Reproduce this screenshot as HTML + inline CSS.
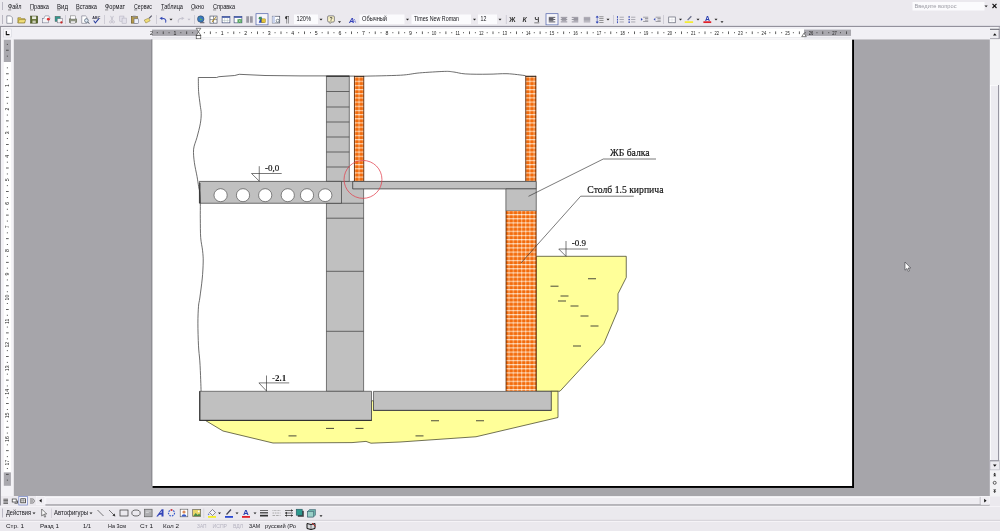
<!DOCTYPE html>
<html><head><meta charset="utf-8"><title>Word</title>
<style>
html,body{margin:0;padding:0;background:#EBE9EE;overflow:hidden;}
body{width:1000px;height:531px;font-family:"Liberation Sans",sans-serif;}
svg{display:block;position:absolute;left:0;top:0;will-change:transform;}
text{white-space:pre;}
</style></head><body>
<svg width="1000" height="531" viewBox="0 0 1000 531" shape-rendering="auto">
<rect x="0" y="0" width="1000" height="531" fill="#EBE9EE"/>
<text x="8" y="8.8" font-size="6.3" fill="#15151a" font-family="Liberation Sans" font-weight="normal" text-anchor="start" textLength="13.5" lengthAdjust="spacingAndGlyphs" >Файл</text>
<rect x="8" y="9.7" width="3.2" height="0.5" fill="#333"/>
<text x="30" y="8.8" font-size="6.3" fill="#15151a" font-family="Liberation Sans" font-weight="normal" text-anchor="start" textLength="19" lengthAdjust="spacingAndGlyphs" >Правка</text>
<rect x="30" y="9.7" width="3.2" height="0.5" fill="#333"/>
<text x="57" y="8.8" font-size="6.3" fill="#15151a" font-family="Liberation Sans" font-weight="normal" text-anchor="start" textLength="11" lengthAdjust="spacingAndGlyphs" >Вид</text>
<rect x="57" y="9.7" width="3.2" height="0.5" fill="#333"/>
<text x="76" y="8.8" font-size="6.3" fill="#15151a" font-family="Liberation Sans" font-weight="normal" text-anchor="start" textLength="21" lengthAdjust="spacingAndGlyphs" >Вставка</text>
<rect x="76" y="9.7" width="3.2" height="0.5" fill="#333"/>
<text x="105" y="8.8" font-size="6.3" fill="#15151a" font-family="Liberation Sans" font-weight="normal" text-anchor="start" textLength="20" lengthAdjust="spacingAndGlyphs" >Формат</text>
<rect x="105" y="9.7" width="3.2" height="0.5" fill="#333"/>
<text x="134" y="8.8" font-size="6.3" fill="#15151a" font-family="Liberation Sans" font-weight="normal" text-anchor="start" textLength="18" lengthAdjust="spacingAndGlyphs" >Сервис</text>
<rect x="134" y="9.7" width="3.2" height="0.5" fill="#333"/>
<text x="161" y="8.8" font-size="6.3" fill="#15151a" font-family="Liberation Sans" font-weight="normal" text-anchor="start" textLength="22" lengthAdjust="spacingAndGlyphs" >Таблица</text>
<rect x="161" y="9.7" width="3.2" height="0.5" fill="#333"/>
<text x="191" y="8.8" font-size="6.3" fill="#15151a" font-family="Liberation Sans" font-weight="normal" text-anchor="start" textLength="13" lengthAdjust="spacingAndGlyphs" >Окно</text>
<rect x="191" y="9.7" width="3.2" height="0.5" fill="#333"/>
<text x="213" y="8.8" font-size="6.3" fill="#15151a" font-family="Liberation Sans" font-weight="normal" text-anchor="start" textLength="22" lengthAdjust="spacingAndGlyphs" >Справка</text>
<rect x="213" y="9.7" width="3.2" height="0.5" fill="#333"/>
<rect x="2" y="2" width="1" height="8" fill="#b9b7c2"/>
<rect x="2" y="15" width="1" height="9" fill="#b9b7c2"/>
<rect x="912.5" y="2" width="72" height="8.5" fill="#fbfbfd"/>
<text x="914.5" y="8.2" font-size="5.8" fill="#9a9aa2" font-family="Liberation Sans" font-weight="normal" text-anchor="start" textLength="42" lengthAdjust="spacingAndGlyphs" >Введите вопрос</text>
<path d="M984.5 5.5h3.2l-1.6 1.8z" fill="#222"/>
<path d="M992.5 3.8l4 4.2M996.5 3.8l-4 4.2" stroke="#111" stroke-width="1.1"/>
<g transform="translate(9.6,19.6) scale(0.93)"><path d="M-3 -4h4l2 2v6h-6z" fill="#fff" stroke="#6b6f80" stroke-width="0.7"/></g>
<g transform="translate(21.6,19.6) scale(0.93)"><path d="M-4 3.5v-5.5h3l1 1h3.5v4.5z" fill="#d9c04f" stroke="#7a6a20" stroke-width="0.6"/><path d="M-4 3.5l1.5-3.5h7l-1.5 3.5z" fill="#f1de7a" stroke="#7a6a20" stroke-width="0.5"/></g>
<g transform="translate(34.1,19.6) scale(0.93)"><rect x="-3.8" y="-3.8" width="7.6" height="7.6" fill="#5a6a2a" stroke="#39431a" stroke-width="0.6"/><rect x="-2.2" y="-3.5" width="4.4" height="3" fill="#e9eadf"/><rect x="-1.8" y="1" width="3.6" height="2.6" fill="#c9cbb8"/></g>
<g transform="translate(45.6,19.6) scale(0.93)"><rect x="-3.5" y="-1" width="6.5" height="4.5" fill="#f3f3f6" stroke="#70758a" stroke-width="0.6"/><path d="M-2 -1l1.5-3h4l1.5 3" fill="#fff" stroke="#70758a" stroke-width="0.6"/><circle cx="3" cy="-0.5" r="1.6" fill="#d33"/></g>
<g transform="translate(58.6,19.6) scale(0.93)"><rect x="-3.8" y="-3.5" width="5.5" height="5.5" fill="#2e9a8e" stroke="#555" stroke-width="0.5"/><rect x="-1.5" y="-1" width="5.5" height="4.5" fill="#f5f5f5" stroke="#667" stroke-width="0.5"/><circle cx="3" cy="3" r="1.2" fill="#c22"/></g>
<rect x="65.4" y="15" width="0.6" height="9" fill="#bdbbc7"/>
<g transform="translate(73,19.6) scale(0.93)"><rect x="-4" y="-0.8" width="8" height="4" fill="#9aa18a" stroke="#555a48" stroke-width="0.6"/><rect x="-2.5" y="-4" width="5" height="3.4" fill="#fff" stroke="#666" stroke-width="0.5"/><rect x="-2.5" y="1.5" width="5" height="2.3" fill="#eee" stroke="#666" stroke-width="0.4"/></g>
<g transform="translate(85,19.6) scale(0.93)"><path d="M-3.5 -4h4l1.5 1.5v6.5h-5.5z" fill="#fff" stroke="#667" stroke-width="0.6"/><circle cx="1.5" cy="1" r="2" fill="#dfe9f5" stroke="#456" stroke-width="0.7"/><path d="M3 2.6l1.6 1.8" stroke="#345" stroke-width="1"/></g>
<g transform="translate(96,19.6) scale(0.93)"><text x="-4" y="-0.5" font-size="4" font-family="Liberation Sans" fill="#334" font-weight="bold">ABC</text><path d="M-2.5 1l1.8 2.6l3.8-4.6" fill="none" stroke="#2a3fa0" stroke-width="1.1"/></g>
<rect x="104.4" y="15" width="0.6" height="9" fill="#bdbbc7"/>
<g transform="translate(112,19.6) scale(0.93)"><path d="M-1.5 -4l2.2 5M1.5 -4l-2.2 5" stroke="#b9b7c4" stroke-width="0.8"/><circle cx="-1.5" cy="2.5" r="1.2" fill="none" stroke="#b9b7c4" stroke-width="0.7"/><circle cx="1.5" cy="2.5" r="1.2" fill="none" stroke="#b9b7c4" stroke-width="0.7"/></g>
<g transform="translate(123,19.6) scale(0.93)"><rect x="-3.5" y="-3.8" width="4.5" height="5.5" fill="#e3e1ea" stroke="#b4b2c0" stroke-width="0.6"/><rect x="-1" y="-1.6" width="4.5" height="5.5" fill="#e3e1ea" stroke="#b4b2c0" stroke-width="0.6"/></g>
<g transform="translate(135,19.6) scale(0.93)"><rect x="-4" y="-3.2" width="6.5" height="7" fill="#b59a4a" stroke="#5d4d1d" stroke-width="0.6"/><rect x="-2.3" y="-4.2" width="3" height="1.8" fill="#8a8a92"/><rect x="-1" y="-0.8" width="5" height="5" fill="#eef0fa" stroke="#555c7a" stroke-width="0.5"/></g>
<g transform="translate(148,19.6) scale(0.93)"><path d="M-4 0.5l4.5-2 1.8 2.8-4.6 2.4z" fill="#f0dd78" stroke="#7c6d26" stroke-width="0.5"/><path d="M1.2 -1.2l2.8-3" stroke="#556" stroke-width="1.2"/></g>
<rect x="156.4" y="15" width="0.6" height="9" fill="#bdbbc7"/>
<g transform="translate(163,19.6) scale(0.93)"><path d="M2.8 3.2c1.2-3.4-1.4-5.4-4.6-3.9" fill="none" stroke="#2f45b5" stroke-width="1.1"/><path d="M-3.8 -1.5l3.2-1.6-0.3 3.2z" fill="#2f45b5"/></g>
<path d="M169.5 18.7h3l-1.5 1.8z" fill="#222"/>
<g transform="translate(181,19.6) scale(0.93)"><path d="M-2.8 3.2c-1.2-3.4 1.4-5.4 4.6-3.9" fill="none" stroke="#c4c2ce" stroke-width="1.1"/><path d="M3.8 -1.5l-3.2-1.6 0.3 3.2z" fill="#c4c2ce"/></g>
<path d="M187.5 18.7h3l-1.5 1.8z" fill="#bdbbc8"/>
<rect x="194.4" y="15" width="0.6" height="9" fill="#bdbbc7"/>
<g transform="translate(201,19.6) scale(0.93)"><circle cx="-0.3" cy="-0.6" r="3.5" fill="#3a78c2" stroke="#234" stroke-width="0.5"/><path d="M-2.5 -2c1.4-1 2.6 0.3 1.6 1.6s1 1.8 2.4 0.2" fill="#5db35a" stroke="none"/><path d="M-1 3.3h4.6" stroke="#667" stroke-width="1.3"/></g>
<g transform="translate(213.5,19.6) scale(0.93)"><rect x="-3.8" y="-3.8" width="7.6" height="7.6" fill="#fff" stroke="#444a5c" stroke-width="0.7"/><path d="M-3.8 0h7.6M0 -3.8v7.6" stroke="#444a5c" stroke-width="0.6"/><path d="M-1.5 2.5l4-5" stroke="#b08a2a" stroke-width="1.1"/></g>
<g transform="translate(226,19.6) scale(0.93)"><rect x="-4.2" y="-3.5" width="8.4" height="7" fill="#fff" stroke="#3d4a78" stroke-width="0.7"/><rect x="-4.2" y="-3.5" width="8.4" height="1.6" fill="#3d55a8"/><path d="M-4.2 1h8.4M-1.4 -2v5.5M1.4 -2v5.5" stroke="#9aa" stroke-width="0.4"/></g>
<g transform="translate(238,19.6) scale(0.93)"><rect x="-4.2" y="-3.5" width="8.4" height="7" fill="#fff" stroke="#3d4a78" stroke-width="0.7"/><rect x="-4.2" y="-3.5" width="8.4" height="1.6" fill="#3d55a8"/><rect x="-0.5" y="-0.5" width="4.5" height="4" fill="#3f9a4a"/><path d="M0.5 0.3l2.5 2.4M3 0.3l-2.5 2.4" stroke="#fff" stroke-width="0.6"/></g>
<g transform="translate(249.5,19.6) scale(0.93)"><path d="M-3.5 -3.5h3v7h-3zM0.5 -3.5h3v7h-3z" fill="#9a98a4"/></g>
<rect x="256" y="13.7" width="12" height="11.2" fill="#f7f6fa" stroke="#4b5fa8" stroke-width="0.7"/>
<g transform="translate(262,19.6) scale(0.93)"><path d="M-3.5 3.5l2.5-7 3 7z" fill="#2a48b8"/><rect x="-0.5" y="-0.8" width="4.2" height="4.2" fill="#e5c53a" stroke="#7a6a20" stroke-width="0.4"/><circle cx="-2" cy="-1.5" r="1.6" fill="#3c8f5a"/></g>
<g transform="translate(276,19.6) scale(0.93)"><rect x="-4" y="-3.6" width="8" height="7.2" fill="#fff" stroke="#444a5c" stroke-width="0.7"/><rect x="-4" y="-3.6" width="3" height="7.2" fill="#c9d3ee"/><circle cx="1.8" cy="1.2" r="1.6" fill="none" stroke="#345" stroke-width="0.6"/></g>
<text x="284.8" y="22.3" font-size="8.5" fill="#333" font-family="Liberation Sans" font-weight="normal" text-anchor="start" >¶</text>
<rect x="294" y="14.5" width="24" height="9.6" fill="#fbfbfd"/>
<text x="296.5" y="21" font-size="6.3" fill="#15151a" font-family="Liberation Sans" font-weight="normal" text-anchor="start" textLength="14.5" lengthAdjust="spacingAndGlyphs" >120%</text>
<path d="M319.5 18.7h3l-1.5 1.8z" fill="#222"/>
<g transform="translate(331,19.6) scale(0.93)"><rect x="-3.6" y="-4" width="7.2" height="6.6" rx="1.2" fill="#fdf6c9" stroke="#4d4d55" stroke-width="0.7"/><path d="M-1 2.6l0 1.8 1.8-1.8" fill="#fdf6c9" stroke="#4d4d55" stroke-width="0.5"/><text x="-1.6" y="1.6" font-size="5.5" font-family="Liberation Sans" font-weight="bold" fill="#333">?</text></g>
<path d="M338.0 21.2h3l-1.5 1.8z" fill="#222"/>
<g transform="translate(353,19.6) scale(0.93)"><text x="-4.2" y="3.2" font-size="8" font-family="Liberation Sans" font-weight="bold" fill="#3340b8" font-style="italic">A</text><text x="-0.5" y="3.2" font-size="6" font-family="Liberation Sans" fill="#6670d0">A</text></g>
<rect x="359.5" y="14.5" width="45" height="9.6" fill="#fbfbfd"/>
<text x="362" y="21" font-size="6.3" fill="#15151a" font-family="Liberation Sans" font-weight="normal" text-anchor="start" textLength="25" lengthAdjust="spacingAndGlyphs" >Обычный</text>
<path d="M406.0 18.7h3l-1.5 1.8z" fill="#222"/>
<rect x="411.5" y="14.5" width="59.5" height="9.6" fill="#fbfbfd"/>
<text x="414" y="21" font-size="6.3" fill="#15151a" font-family="Liberation Sans" font-weight="normal" text-anchor="start" textLength="45" lengthAdjust="spacingAndGlyphs" >Times New Roman</text>
<path d="M473.0 18.7h3l-1.5 1.8z" fill="#222"/>
<rect x="478" y="14.5" width="19" height="9.6" fill="#fbfbfd"/>
<text x="480.5" y="21" font-size="6.3" fill="#15151a" font-family="Liberation Sans" font-weight="normal" text-anchor="start" textLength="5.8" lengthAdjust="spacingAndGlyphs" >12</text>
<path d="M498.5 18.7h3l-1.5 1.8z" fill="#222"/>
<rect x="505.9" y="15" width="0.6" height="9" fill="#bdbbc7"/>
<text x="509.3" y="21.8" font-size="6.8" fill="#333" font-family="Liberation Sans" font-weight="bold" text-anchor="start" >Ж</text>
<text x="522.5" y="21.8" font-size="6.8" fill="#333" font-family="Liberation Sans" font-weight="bold" text-anchor="start" font-style="italic">К</text>
<text x="534.5" y="21.6" font-size="6.8" fill="#333" font-family="Liberation Sans" font-weight="bold" text-anchor="start" >Ч</text>
<rect x="534.3" y="22.6" width="5" height="0.6" fill="#333"/>
<rect x="546" y="13.7" width="12" height="11.2" fill="#f7f6fa" stroke="#4b5fa8" stroke-width="0.7"/>
<g transform="translate(552,19.6) scale(0.93)"><rect x="-3.5" y="-2.9" width="7" height="0.8" fill="#2b2b36"/><rect x="-3.5" y="-1.65" width="5" height="0.8" fill="#2b2b36"/><rect x="-3.5" y="-0.3999999999999999" width="7" height="0.8" fill="#2b2b36"/><rect x="-3.5" y="0.8500000000000001" width="5" height="0.8" fill="#2b2b36"/><rect x="-3.5" y="2.1" width="7" height="0.8" fill="#2b2b36"/></g>
<g transform="translate(564,19.6) scale(0.93)"><rect x="-3.5" y="-2.9" width="7" height="0.8" fill="#7c7a86"/><rect x="-2.5" y="-1.65" width="5" height="0.8" fill="#7c7a86"/><rect x="-3.5" y="-0.3999999999999999" width="7" height="0.8" fill="#7c7a86"/><rect x="-2.5" y="0.8500000000000001" width="5" height="0.8" fill="#7c7a86"/><rect x="-3.5" y="2.1" width="7" height="0.8" fill="#7c7a86"/></g>
<g transform="translate(575,19.6) scale(0.93)"><rect x="-3.5" y="-2.9" width="7" height="0.8" fill="#7c7a86"/><rect x="-1.5" y="-1.65" width="5" height="0.8" fill="#7c7a86"/><rect x="-3.5" y="-0.3999999999999999" width="7" height="0.8" fill="#7c7a86"/><rect x="-1.5" y="0.8500000000000001" width="5" height="0.8" fill="#7c7a86"/><rect x="-3.5" y="2.1" width="7" height="0.8" fill="#7c7a86"/></g>
<g transform="translate(587,19.6) scale(0.93)"><rect x="-3.5" y="-2.9" width="7" height="0.8" fill="#8f8d99"/><rect x="-3.5" y="-1.65" width="7" height="0.8" fill="#8f8d99"/><rect x="-3.5" y="-0.3999999999999999" width="7" height="0.8" fill="#8f8d99"/><rect x="-3.5" y="0.8500000000000001" width="7" height="0.8" fill="#8f8d99"/><rect x="-3.5" y="2.1" width="7" height="0.8" fill="#8f8d99"/></g>
<g transform="translate(600,19.6) scale(0.93)"><path d="M-3 -3.5v7M-3 -4l-1.2 1.6h2.4zM-3 4l-1.2-1.6h2.4z" stroke="#2f45b5" stroke-width="0.6" fill="#2f45b5"/><rect x="-0.8" y="-3.4" width="4.6" height="0.8" fill="#777"/><rect x="-0.8" y="-1.4" width="4.6" height="0.8" fill="#777"/><rect x="-0.8" y="0.6" width="4.6" height="0.8" fill="#777"/><rect x="-0.8" y="2.6" width="4.6" height="0.8" fill="#777"/></g>
<path d="M606.5 18.7h3l-1.5 1.8z" fill="#222"/>
<rect x="613.4" y="15" width="0.6" height="9" fill="#bdbbc7"/>
<g transform="translate(620.5,19.6) scale(0.93)"><rect x="-1" y="-3" width="4.6" height="0.7" fill="#8a8a94"/><rect x="-1" y="-0.4" width="4.6" height="0.7" fill="#8a8a94"/><rect x="-1" y="2.2" width="4.6" height="0.7" fill="#8a8a94"/><rect x="-3.8" y="-3.8" width="1" height="2" fill="#2f45b5"/><rect x="-3.8" y="-1" width="1" height="2" fill="#2f45b5"/><rect x="-3.8" y="1.8" width="1" height="2" fill="#2f45b5"/></g>
<g transform="translate(632,19.6) scale(0.93)"><rect x="-1" y="-3" width="4.6" height="0.7" fill="#8a8a94"/><rect x="-1" y="-0.4" width="4.6" height="0.7" fill="#8a8a94"/><rect x="-1" y="2.2" width="4.6" height="0.7" fill="#8a8a94"/><rect x="-3.8" y="-3.6" width="1.5" height="1.5" fill="#2f45b5"/><rect x="-3.8" y="-0.8" width="1.5" height="1.5" fill="#2f45b5"/><rect x="-3.8" y="2" width="1.5" height="1.5" fill="#2f45b5"/></g>
<g transform="translate(644.5,19.6) scale(0.93)"><rect x="-1.5" y="-3" width="5.5" height="0.7" fill="#77777f"/><rect x="0.5" y="-1.4" width="3.5" height="0.7" fill="#77777f"/><rect x="0.5" y="0.2" width="3.5" height="0.7" fill="#77777f"/><rect x="-1.5" y="1.8" width="5.5" height="0.7" fill="#77777f"/><path d="M-3.8 -1.8v3l1.9-1.5z" fill="#2f45b5"/></g>
<g transform="translate(657,19.6) scale(0.93)"><rect x="-1.5" y="-3" width="5.5" height="0.7" fill="#77777f"/><rect x="0.5" y="-1.4" width="3.5" height="0.7" fill="#77777f"/><rect x="0.5" y="0.2" width="3.5" height="0.7" fill="#77777f"/><rect x="-1.5" y="1.8" width="5.5" height="0.7" fill="#77777f"/><path d="M-1.7999999999999998 -1.8v3l-1.9-1.5z" fill="#2f45b5"/></g>
<rect x="663.4" y="15" width="0.6" height="9" fill="#bdbbc7"/>
<g transform="translate(672,19.6) scale(0.93)"><rect x="-3.5" y="-2.8" width="7" height="6.2" fill="#fff" stroke="#55596a" stroke-width="0.7"/><path d="M-3.5 0.3h7M0 -2.8v6.2" stroke="#c5c5d0" stroke-width="0.4"/></g>
<path d="M679.0 18.7h3l-1.5 1.8z" fill="#222"/>
<g transform="translate(689,19.6) scale(0.93)"><path d="M-1.5 0.6l4-4.2" stroke="#6a6f8a" stroke-width="1.4"/><rect x="-4.6" y="1.8" width="9" height="1.8" fill="#f4ee2a"/></g>
<path d="M696.5 18.7h3l-1.5 1.8z" fill="#222"/>
<g transform="translate(707.3,19.6) scale(0.93)"><text x="-2.6" y="1.2" font-size="7.4" font-family="Liberation Sans" font-weight="bold" fill="#2a3fb0">A</text><rect x="-4.2" y="1.8" width="8.4" height="1.9" fill="#e0202a"/></g>
<path d="M714.5 18.7h3l-1.5 1.8z" fill="#222"/>
<path d="M720.5 21.2h3l-1.5 1.8z" fill="#222"/>
<rect x="0" y="25.6" width="1000" height="0.6" fill="#c9c7d2"/>
<rect x="0" y="26.0" width="1000" height="0.9" fill="#7d7c88"/>
<rect x="0" y="26.9" width="1000" height="12.4" fill="#f1f0f5"/>
<rect x="13.6" y="39.5" width="976.3" height="456.5" fill="#A6A5AA"/>
<rect x="0" y="39.3" width="13.6" height="457" fill="#f3f2f6"/>
<rect x="3.5" y="29" width="8" height="8" fill="#f8f7fb" stroke="#d0cfd8" stroke-width="0.5"/>
<path d="M6.3 31v3.6h3.2" fill="none" stroke="#111" stroke-width="1.1"/>
<rect x="152" y="29.6" width="46.5" height="6.3" fill="#a9a8ae"/>
<rect x="198.5" y="28.8" width="605.5" height="10.5" fill="#fff"/>
<rect x="804" y="29.6" width="47" height="6.3" fill="#a9a8ae"/>
<text x="151.4" y="35.2" font-size="5.2" fill="#222" font-family="Liberation Sans" font-weight="normal" text-anchor="middle" >2</text>
<rect x="156.8" y="32.2" width="0.9" height="1" fill="#3a3a3a"/>
<rect x="162.8" y="31.4" width="0.8" height="2.7" fill="#3a3a3a"/>
<rect x="168.6" y="32.2" width="0.9" height="1" fill="#3a3a3a"/>
<text x="174.9" y="35.2" font-size="5.2" fill="#222" font-family="Liberation Sans" font-weight="normal" text-anchor="middle" >1</text>
<rect x="180.4" y="32.2" width="0.9" height="1" fill="#3a3a3a"/>
<rect x="186.3" y="31.4" width="0.8" height="2.7" fill="#3a3a3a"/>
<rect x="192.2" y="32.2" width="0.9" height="1" fill="#3a3a3a"/>
<rect x="203.9" y="32.2" width="0.9" height="1" fill="#3a3a3a"/>
<rect x="209.9" y="31.4" width="0.8" height="2.7" fill="#3a3a3a"/>
<rect x="215.7" y="32.2" width="0.9" height="1" fill="#3a3a3a"/>
<text x="222.1" y="35.2" font-size="5.2" fill="#222" font-family="Liberation Sans" font-weight="normal" text-anchor="middle" >1</text>
<rect x="227.5" y="32.2" width="0.9" height="1" fill="#3a3a3a"/>
<rect x="233.4" y="31.4" width="0.8" height="2.7" fill="#3a3a3a"/>
<rect x="239.3" y="32.2" width="0.9" height="1" fill="#3a3a3a"/>
<text x="245.6" y="35.2" font-size="5.2" fill="#222" font-family="Liberation Sans" font-weight="normal" text-anchor="middle" >2</text>
<rect x="251.1" y="32.2" width="0.9" height="1" fill="#3a3a3a"/>
<rect x="257.0" y="31.4" width="0.8" height="2.7" fill="#3a3a3a"/>
<rect x="262.8" y="32.2" width="0.9" height="1" fill="#3a3a3a"/>
<text x="269.2" y="35.2" font-size="5.2" fill="#222" font-family="Liberation Sans" font-weight="normal" text-anchor="middle" >3</text>
<rect x="274.6" y="32.2" width="0.9" height="1" fill="#3a3a3a"/>
<rect x="280.6" y="31.4" width="0.8" height="2.7" fill="#3a3a3a"/>
<rect x="286.4" y="32.2" width="0.9" height="1" fill="#3a3a3a"/>
<text x="292.7" y="35.2" font-size="5.2" fill="#222" font-family="Liberation Sans" font-weight="normal" text-anchor="middle" >4</text>
<rect x="298.2" y="32.2" width="0.9" height="1" fill="#3a3a3a"/>
<rect x="304.1" y="31.4" width="0.8" height="2.7" fill="#3a3a3a"/>
<rect x="310.0" y="32.2" width="0.9" height="1" fill="#3a3a3a"/>
<text x="316.3" y="35.2" font-size="5.2" fill="#222" font-family="Liberation Sans" font-weight="normal" text-anchor="middle" >5</text>
<rect x="321.7" y="32.2" width="0.9" height="1" fill="#3a3a3a"/>
<rect x="327.7" y="31.4" width="0.8" height="2.7" fill="#3a3a3a"/>
<rect x="333.5" y="32.2" width="0.9" height="1" fill="#3a3a3a"/>
<text x="339.9" y="35.2" font-size="5.2" fill="#222" font-family="Liberation Sans" font-weight="normal" text-anchor="middle" >6</text>
<rect x="345.3" y="32.2" width="0.9" height="1" fill="#3a3a3a"/>
<rect x="351.2" y="31.4" width="0.8" height="2.7" fill="#3a3a3a"/>
<rect x="357.1" y="32.2" width="0.9" height="1" fill="#3a3a3a"/>
<text x="363.4" y="35.2" font-size="5.2" fill="#222" font-family="Liberation Sans" font-weight="normal" text-anchor="middle" >7</text>
<rect x="368.9" y="32.2" width="0.9" height="1" fill="#3a3a3a"/>
<rect x="374.8" y="31.4" width="0.8" height="2.7" fill="#3a3a3a"/>
<rect x="380.6" y="32.2" width="0.9" height="1" fill="#3a3a3a"/>
<text x="387.0" y="35.2" font-size="5.2" fill="#222" font-family="Liberation Sans" font-weight="normal" text-anchor="middle" >8</text>
<rect x="392.4" y="32.2" width="0.9" height="1" fill="#3a3a3a"/>
<rect x="398.4" y="31.4" width="0.8" height="2.7" fill="#3a3a3a"/>
<rect x="404.2" y="32.2" width="0.9" height="1" fill="#3a3a3a"/>
<text x="410.5" y="35.2" font-size="5.2" fill="#222" font-family="Liberation Sans" font-weight="normal" text-anchor="middle" >9</text>
<rect x="416.0" y="32.2" width="0.9" height="1" fill="#3a3a3a"/>
<rect x="421.9" y="31.4" width="0.8" height="2.7" fill="#3a3a3a"/>
<rect x="427.8" y="32.2" width="0.9" height="1" fill="#3a3a3a"/>
<text x="434.1" y="35.2" font-size="5.2" fill="#222" font-family="Liberation Sans" font-weight="normal" text-anchor="middle" textLength="4.6" lengthAdjust="spacingAndGlyphs" >10</text>
<rect x="439.5" y="32.2" width="0.9" height="1" fill="#3a3a3a"/>
<rect x="445.5" y="31.4" width="0.8" height="2.7" fill="#3a3a3a"/>
<rect x="451.3" y="32.2" width="0.9" height="1" fill="#3a3a3a"/>
<text x="457.7" y="35.2" font-size="5.2" fill="#222" font-family="Liberation Sans" font-weight="normal" text-anchor="middle" textLength="4.6" lengthAdjust="spacingAndGlyphs" >11</text>
<rect x="463.1" y="32.2" width="0.9" height="1" fill="#3a3a3a"/>
<rect x="469.0" y="31.4" width="0.8" height="2.7" fill="#3a3a3a"/>
<rect x="474.9" y="32.2" width="0.9" height="1" fill="#3a3a3a"/>
<text x="481.2" y="35.2" font-size="5.2" fill="#222" font-family="Liberation Sans" font-weight="normal" text-anchor="middle" textLength="4.6" lengthAdjust="spacingAndGlyphs" >12</text>
<rect x="486.7" y="32.2" width="0.9" height="1" fill="#3a3a3a"/>
<rect x="492.6" y="31.4" width="0.8" height="2.7" fill="#3a3a3a"/>
<rect x="498.4" y="32.2" width="0.9" height="1" fill="#3a3a3a"/>
<text x="504.8" y="35.2" font-size="5.2" fill="#222" font-family="Liberation Sans" font-weight="normal" text-anchor="middle" textLength="4.6" lengthAdjust="spacingAndGlyphs" >13</text>
<rect x="510.2" y="32.2" width="0.9" height="1" fill="#3a3a3a"/>
<rect x="516.2" y="31.4" width="0.8" height="2.7" fill="#3a3a3a"/>
<rect x="522.0" y="32.2" width="0.9" height="1" fill="#3a3a3a"/>
<text x="528.3" y="35.2" font-size="5.2" fill="#222" font-family="Liberation Sans" font-weight="normal" text-anchor="middle" textLength="4.6" lengthAdjust="spacingAndGlyphs" >14</text>
<rect x="533.8" y="32.2" width="0.9" height="1" fill="#3a3a3a"/>
<rect x="539.7" y="31.4" width="0.8" height="2.7" fill="#3a3a3a"/>
<rect x="545.6" y="32.2" width="0.9" height="1" fill="#3a3a3a"/>
<text x="551.9" y="35.2" font-size="5.2" fill="#222" font-family="Liberation Sans" font-weight="normal" text-anchor="middle" textLength="4.6" lengthAdjust="spacingAndGlyphs" >15</text>
<rect x="557.3" y="32.2" width="0.9" height="1" fill="#3a3a3a"/>
<rect x="563.3" y="31.4" width="0.8" height="2.7" fill="#3a3a3a"/>
<rect x="569.1" y="32.2" width="0.9" height="1" fill="#3a3a3a"/>
<text x="575.5" y="35.2" font-size="5.2" fill="#222" font-family="Liberation Sans" font-weight="normal" text-anchor="middle" textLength="4.6" lengthAdjust="spacingAndGlyphs" >16</text>
<rect x="580.9" y="32.2" width="0.9" height="1" fill="#3a3a3a"/>
<rect x="586.8" y="31.4" width="0.8" height="2.7" fill="#3a3a3a"/>
<rect x="592.7" y="32.2" width="0.9" height="1" fill="#3a3a3a"/>
<text x="599.0" y="35.2" font-size="5.2" fill="#222" font-family="Liberation Sans" font-weight="normal" text-anchor="middle" textLength="4.6" lengthAdjust="spacingAndGlyphs" >17</text>
<rect x="604.5" y="32.2" width="0.9" height="1" fill="#3a3a3a"/>
<rect x="610.4" y="31.4" width="0.8" height="2.7" fill="#3a3a3a"/>
<rect x="616.2" y="32.2" width="0.9" height="1" fill="#3a3a3a"/>
<text x="622.6" y="35.2" font-size="5.2" fill="#222" font-family="Liberation Sans" font-weight="normal" text-anchor="middle" textLength="4.6" lengthAdjust="spacingAndGlyphs" >18</text>
<rect x="628.0" y="32.2" width="0.9" height="1" fill="#3a3a3a"/>
<rect x="634.0" y="31.4" width="0.8" height="2.7" fill="#3a3a3a"/>
<rect x="639.8" y="32.2" width="0.9" height="1" fill="#3a3a3a"/>
<text x="646.1" y="35.2" font-size="5.2" fill="#222" font-family="Liberation Sans" font-weight="normal" text-anchor="middle" textLength="4.6" lengthAdjust="spacingAndGlyphs" >19</text>
<rect x="651.6" y="32.2" width="0.9" height="1" fill="#3a3a3a"/>
<rect x="657.5" y="31.4" width="0.8" height="2.7" fill="#3a3a3a"/>
<rect x="663.4" y="32.2" width="0.9" height="1" fill="#3a3a3a"/>
<text x="669.7" y="35.2" font-size="5.2" fill="#222" font-family="Liberation Sans" font-weight="normal" text-anchor="middle" textLength="4.6" lengthAdjust="spacingAndGlyphs" >20</text>
<rect x="675.1" y="32.2" width="0.9" height="1" fill="#3a3a3a"/>
<rect x="681.1" y="31.4" width="0.8" height="2.7" fill="#3a3a3a"/>
<rect x="686.9" y="32.2" width="0.9" height="1" fill="#3a3a3a"/>
<text x="693.3" y="35.2" font-size="5.2" fill="#222" font-family="Liberation Sans" font-weight="normal" text-anchor="middle" textLength="4.6" lengthAdjust="spacingAndGlyphs" >21</text>
<rect x="698.7" y="32.2" width="0.9" height="1" fill="#3a3a3a"/>
<rect x="704.6" y="31.4" width="0.8" height="2.7" fill="#3a3a3a"/>
<rect x="710.5" y="32.2" width="0.9" height="1" fill="#3a3a3a"/>
<text x="716.8" y="35.2" font-size="5.2" fill="#222" font-family="Liberation Sans" font-weight="normal" text-anchor="middle" textLength="4.6" lengthAdjust="spacingAndGlyphs" >22</text>
<rect x="722.3" y="32.2" width="0.9" height="1" fill="#3a3a3a"/>
<rect x="728.2" y="31.4" width="0.8" height="2.7" fill="#3a3a3a"/>
<rect x="734.0" y="32.2" width="0.9" height="1" fill="#3a3a3a"/>
<text x="740.4" y="35.2" font-size="5.2" fill="#222" font-family="Liberation Sans" font-weight="normal" text-anchor="middle" textLength="4.6" lengthAdjust="spacingAndGlyphs" >23</text>
<rect x="745.8" y="32.2" width="0.9" height="1" fill="#3a3a3a"/>
<rect x="751.8" y="31.4" width="0.8" height="2.7" fill="#3a3a3a"/>
<rect x="757.6" y="32.2" width="0.9" height="1" fill="#3a3a3a"/>
<text x="763.9" y="35.2" font-size="5.2" fill="#222" font-family="Liberation Sans" font-weight="normal" text-anchor="middle" textLength="4.6" lengthAdjust="spacingAndGlyphs" >24</text>
<rect x="769.4" y="32.2" width="0.9" height="1" fill="#3a3a3a"/>
<rect x="775.3" y="31.4" width="0.8" height="2.7" fill="#3a3a3a"/>
<rect x="781.2" y="32.2" width="0.9" height="1" fill="#3a3a3a"/>
<text x="787.5" y="35.2" font-size="5.2" fill="#222" font-family="Liberation Sans" font-weight="normal" text-anchor="middle" textLength="4.6" lengthAdjust="spacingAndGlyphs" >25</text>
<rect x="792.9" y="32.2" width="0.9" height="1" fill="#3a3a3a"/>
<rect x="798.9" y="31.4" width="0.8" height="2.7" fill="#3a3a3a"/>
<rect x="804.7" y="32.2" width="0.9" height="1" fill="#3a3a3a"/>
<text x="811.1" y="35.2" font-size="5.2" fill="#222" font-family="Liberation Sans" font-weight="normal" text-anchor="middle" textLength="4.6" lengthAdjust="spacingAndGlyphs" >26</text>
<rect x="816.5" y="32.2" width="0.9" height="1" fill="#3a3a3a"/>
<rect x="822.4" y="31.4" width="0.8" height="2.7" fill="#3a3a3a"/>
<rect x="828.3" y="32.2" width="0.9" height="1" fill="#3a3a3a"/>
<text x="834.6" y="35.2" font-size="5.2" fill="#222" font-family="Liberation Sans" font-weight="normal" text-anchor="middle" textLength="4.6" lengthAdjust="spacingAndGlyphs" >27</text>
<rect x="840.1" y="32.2" width="0.9" height="1" fill="#3a3a3a"/>
<rect x="846.0" y="31.4" width="0.8" height="2.7" fill="#3a3a3a"/>
<rect x="152" y="37.5" width="699" height="0.7" fill="#dcdbe2"/>
<path d="M196.2 28.3h4.6l-2.3 3.4z M196.2 35.3h4.6l-2.3-3.4z" fill="#fff" stroke="#333" stroke-width="0.6"/>
<rect x="196.2" y="35.6" width="4.6" height="3.2" fill="#fff" stroke="#333" stroke-width="0.6"/>
<path d="M801.7 36.6h4.6l-2.3-3.4z" fill="#fff" stroke="#333" stroke-width="0.6"/>
<rect x="3.8" y="39.8" width="7.1" height="22.200000000000003" fill="#a9a8ae"/>
<rect x="3.8" y="62.0" width="7.1" height="410.4" fill="#fff"/>
<rect x="3.8" y="472.4" width="7.1" height="13.400000000000034" fill="#a9a8ae"/>
<rect x="6.85" y="43.9" width="1" height="0.9" fill="#3a3a3a"/>
<rect x="6" y="49.8" width="2.7" height="0.8" fill="#3a3a3a"/>
<rect x="6.85" y="55.7" width="1" height="0.9" fill="#3a3a3a"/>
<rect x="6.85" y="67.4" width="1" height="0.9" fill="#3a3a3a"/>
<rect x="6" y="73.4" width="2.7" height="0.8" fill="#3a3a3a"/>
<rect x="6.85" y="79.2" width="1" height="0.9" fill="#3a3a3a"/>
<text transform="translate(9.2,85.6) rotate(-90)" font-size="5.2" font-family="Liberation Sans" fill="#222" text-anchor="middle">1</text>
<rect x="6.85" y="91.0" width="1" height="0.9" fill="#3a3a3a"/>
<rect x="6" y="96.9" width="2.7" height="0.8" fill="#3a3a3a"/>
<rect x="6.85" y="102.8" width="1" height="0.9" fill="#3a3a3a"/>
<text transform="translate(9.2,109.1) rotate(-90)" font-size="5.2" font-family="Liberation Sans" fill="#222" text-anchor="middle">2</text>
<rect x="6.85" y="114.6" width="1" height="0.9" fill="#3a3a3a"/>
<rect x="6" y="120.5" width="2.7" height="0.8" fill="#3a3a3a"/>
<rect x="6.85" y="126.3" width="1" height="0.9" fill="#3a3a3a"/>
<text transform="translate(9.2,132.7) rotate(-90)" font-size="5.2" font-family="Liberation Sans" fill="#222" text-anchor="middle">3</text>
<rect x="6.85" y="138.1" width="1" height="0.9" fill="#3a3a3a"/>
<rect x="6" y="144.1" width="2.7" height="0.8" fill="#3a3a3a"/>
<rect x="6.85" y="149.9" width="1" height="0.9" fill="#3a3a3a"/>
<text transform="translate(9.2,156.2) rotate(-90)" font-size="5.2" font-family="Liberation Sans" fill="#222" text-anchor="middle">4</text>
<rect x="6.85" y="161.7" width="1" height="0.9" fill="#3a3a3a"/>
<rect x="6" y="167.6" width="2.7" height="0.8" fill="#3a3a3a"/>
<rect x="6.85" y="173.5" width="1" height="0.9" fill="#3a3a3a"/>
<text transform="translate(9.2,179.8) rotate(-90)" font-size="5.2" font-family="Liberation Sans" fill="#222" text-anchor="middle">5</text>
<rect x="6.85" y="185.2" width="1" height="0.9" fill="#3a3a3a"/>
<rect x="6" y="191.2" width="2.7" height="0.8" fill="#3a3a3a"/>
<rect x="6.85" y="197.0" width="1" height="0.9" fill="#3a3a3a"/>
<text transform="translate(9.2,203.4) rotate(-90)" font-size="5.2" font-family="Liberation Sans" fill="#222" text-anchor="middle">6</text>
<rect x="6.85" y="208.8" width="1" height="0.9" fill="#3a3a3a"/>
<rect x="6" y="214.7" width="2.7" height="0.8" fill="#3a3a3a"/>
<rect x="6.85" y="220.6" width="1" height="0.9" fill="#3a3a3a"/>
<text transform="translate(9.2,226.9) rotate(-90)" font-size="5.2" font-family="Liberation Sans" fill="#222" text-anchor="middle">7</text>
<rect x="6.85" y="232.4" width="1" height="0.9" fill="#3a3a3a"/>
<rect x="6" y="238.3" width="2.7" height="0.8" fill="#3a3a3a"/>
<rect x="6.85" y="244.1" width="1" height="0.9" fill="#3a3a3a"/>
<text transform="translate(9.2,250.5) rotate(-90)" font-size="5.2" font-family="Liberation Sans" fill="#222" text-anchor="middle">8</text>
<rect x="6.85" y="255.9" width="1" height="0.9" fill="#3a3a3a"/>
<rect x="6" y="261.9" width="2.7" height="0.8" fill="#3a3a3a"/>
<rect x="6.85" y="267.7" width="1" height="0.9" fill="#3a3a3a"/>
<text transform="translate(9.2,274.0) rotate(-90)" font-size="5.2" font-family="Liberation Sans" fill="#222" text-anchor="middle">9</text>
<rect x="6.85" y="279.5" width="1" height="0.9" fill="#3a3a3a"/>
<rect x="6" y="285.4" width="2.7" height="0.8" fill="#3a3a3a"/>
<rect x="6.85" y="291.3" width="1" height="0.9" fill="#3a3a3a"/>
<text transform="translate(9.2,297.6) rotate(-90)" font-size="5.2" font-family="Liberation Sans" fill="#222" text-anchor="middle">10</text>
<rect x="6.85" y="303.0" width="1" height="0.9" fill="#3a3a3a"/>
<rect x="6" y="309.0" width="2.7" height="0.8" fill="#3a3a3a"/>
<rect x="6.85" y="314.8" width="1" height="0.9" fill="#3a3a3a"/>
<text transform="translate(9.2,321.2) rotate(-90)" font-size="5.2" font-family="Liberation Sans" fill="#222" text-anchor="middle">11</text>
<rect x="6.85" y="326.6" width="1" height="0.9" fill="#3a3a3a"/>
<rect x="6" y="332.5" width="2.7" height="0.8" fill="#3a3a3a"/>
<rect x="6.85" y="338.4" width="1" height="0.9" fill="#3a3a3a"/>
<text transform="translate(9.2,344.7) rotate(-90)" font-size="5.2" font-family="Liberation Sans" fill="#222" text-anchor="middle">12</text>
<rect x="6.85" y="350.2" width="1" height="0.9" fill="#3a3a3a"/>
<rect x="6" y="356.1" width="2.7" height="0.8" fill="#3a3a3a"/>
<rect x="6.85" y="361.9" width="1" height="0.9" fill="#3a3a3a"/>
<text transform="translate(9.2,368.3) rotate(-90)" font-size="5.2" font-family="Liberation Sans" fill="#222" text-anchor="middle">13</text>
<rect x="6.85" y="373.7" width="1" height="0.9" fill="#3a3a3a"/>
<rect x="6" y="379.7" width="2.7" height="0.8" fill="#3a3a3a"/>
<rect x="6.85" y="385.5" width="1" height="0.9" fill="#3a3a3a"/>
<text transform="translate(9.2,391.8) rotate(-90)" font-size="5.2" font-family="Liberation Sans" fill="#222" text-anchor="middle">14</text>
<rect x="6.85" y="397.3" width="1" height="0.9" fill="#3a3a3a"/>
<rect x="6" y="403.2" width="2.7" height="0.8" fill="#3a3a3a"/>
<rect x="6.85" y="409.1" width="1" height="0.9" fill="#3a3a3a"/>
<text transform="translate(9.2,415.4) rotate(-90)" font-size="5.2" font-family="Liberation Sans" fill="#222" text-anchor="middle">15</text>
<rect x="6.85" y="420.8" width="1" height="0.9" fill="#3a3a3a"/>
<rect x="6" y="426.8" width="2.7" height="0.8" fill="#3a3a3a"/>
<rect x="6.85" y="432.6" width="1" height="0.9" fill="#3a3a3a"/>
<text transform="translate(9.2,439.0) rotate(-90)" font-size="5.2" font-family="Liberation Sans" fill="#222" text-anchor="middle">16</text>
<rect x="6.85" y="444.4" width="1" height="0.9" fill="#3a3a3a"/>
<rect x="6" y="450.3" width="2.7" height="0.8" fill="#3a3a3a"/>
<rect x="6.85" y="456.2" width="1" height="0.9" fill="#3a3a3a"/>
<text transform="translate(9.2,462.5) rotate(-90)" font-size="5.2" font-family="Liberation Sans" fill="#222" text-anchor="middle">17</text>
<rect x="6.85" y="468.0" width="1" height="0.9" fill="#3a3a3a"/>
<rect x="6" y="473.9" width="2.7" height="0.8" fill="#3a3a3a"/>
<rect x="6.85" y="479.7" width="1" height="0.9" fill="#3a3a3a"/>
<rect x="854" y="39.3" width="0" height="0"/>
<rect x="852" y="39.8" width="2" height="448.1" fill="#000"/><rect x="152.6" y="486" width="701.4" height="1.9" fill="#000"/>
<rect x="151.9" y="39.3" width="700.2" height="446.7" fill="#fff"/>
<rect x="151.6" y="39.3" width="0.7" height="446.7" fill="#5c5c64"/>
<defs>
<pattern id="brick" x="358.5" y="80.7" width="4.1667" height="4.1667" patternUnits="userSpaceOnUse">
<rect x="0" y="0" width="4.1667" height="4.1667" fill="#f36b0c"/>
<rect x="0" y="0" width="1.15" height="4.1667" fill="#f9aa6c"/>
<rect x="0" y="0" width="4.1667" height="1.15" fill="#fccfa8"/>
<rect x="0" y="0" width="1.15" height="1.15" fill="#ffeedd"/>
</pattern>
</defs>
<g stroke-linejoin="round" stroke-linecap="butt">
<!-- yellow sand -->
<path d="M536.25 256.3 L626.25 256.3 L626.25 277.5 L618 293.75 L618 310 L603.75 343.75 L586 363 L560 391.2 L536.25 391.2 Z" fill="#ffff99" stroke="#35351c" stroke-width="0.7"/>
<path d="M205.5 420.5 L223 431 L273 443 L352 442.6 L366 441.4 L371 443.2 L400 442 L476 436.75 L558 417.5 L558 391.3 L551 391.3 L551 410.5 L373.5 410.5 L373.5 400.8 L371.5 400.8 L371.5 420.5 Z" fill="#ffff99" stroke="#35351c" stroke-width="0.7"/>
<!-- dashes -->
<path d="M588 278.75h8M550.5 286.2h8M560.5 296h8M558 301h8M570.5 306h8M580.5 316h8M590.5 326h8M573 346h8M288.5 435.9h8M326 428.4h8M355.5 428.4h8M415.5 435.9h8M431 420.75h8M476 420.75h8" stroke="#2a2a2a" stroke-width="0.85" fill="none"/>
<!-- lower wall -->
<rect x="326.45" y="181.4" width="37.15" height="210" fill="#c0c0c0" stroke="#3a3a3a" stroke-width="0.65"/>
<path d="M326.45 218.2h37.15M326.45 271.3h37.15M326.45 331.3h37.15M326.45 203.25h37.15" stroke="#3a3a3a" stroke-width="0.7"/>
<!-- upper wall -->
<rect x="326.45" y="75.7" width="22.85" height="105.7" fill="#c0c0c0" stroke="#3a3a3a" stroke-width="0.65"/>
<path d="M326.3 76.3h23.1" stroke="#222" stroke-width="1"/>
<path d="M326.45 91.5h22.85M326.45 107h22.85M326.45 122h22.85M326.45 137h22.85M326.45 152h22.85M326.45 167h22.85" stroke="#3a3a3a" stroke-width="0.7"/>
<!-- slab -->
<rect x="199.4" y="181.4" width="142.1" height="21.85" fill="#c0c0c0" stroke="#3a3a3a" stroke-width="0.7"/>
<g fill="#fff" stroke="#3a3a3a" stroke-width="0.6">
<ellipse cx="220.6" cy="195.2" rx="6.6" ry="6.5"/>
<ellipse cx="243" cy="195.2" rx="6.6" ry="6.5"/>
<ellipse cx="265.2" cy="195.2" rx="6.6" ry="6.5"/>
<ellipse cx="287.75" cy="195.2" rx="6.6" ry="6.5"/>
<ellipse cx="307" cy="195.2" rx="6.6" ry="6.5"/>
<ellipse cx="325.2" cy="195.2" rx="6.7" ry="6.4"/>
</g>
<!-- outline freeform -->
<g fill="none" stroke="#3c3c3c" stroke-width="0.75">
<path d="M201.1 391.3 C201.0 389.4 200.9 384.8 200.7 379.7 C200.5 374.6 200.2 366.5 199.8 360.9 C199.4 355.2 198.8 352.1 198.5 345.8 C198.2 339.5 197.9 329.8 197.9 323.2 C197.9 316.6 198.2 310.5 198.5 306.3 C198.8 302.1 199.2 302.6 199.8 298.0 C200.4 293.4 201.6 285.0 202.2 279.0 C202.8 273.0 203.1 266.7 203.2 262.0 C203.3 257.3 203.0 254.9 202.6 250.8 C202.2 246.8 201.1 243.0 200.7 237.7 C200.3 232.4 200.4 224.6 200.3 218.8 C200.2 213.1 200.4 207.7 200.3 203.2 C200.2 198.7 200.0 194.8 199.7 192.0 C199.4 189.2 199.0 189.0 198.6 186.4 C198.2 183.8 197.7 180.2 197.0 176.3 C196.3 172.4 195.0 167.2 194.4 162.7 C193.8 158.2 193.2 153.4 193.6 149.2 C194.0 145.0 195.9 141.6 197.0 137.3 C198.1 133.1 199.6 127.7 200.3 123.7 C201.0 119.8 201.2 116.7 201.2 113.6 C201.2 110.5 200.7 108.9 200.2 105.2 C199.8 101.5 198.9 96.2 198.6 91.6 C198.3 87.0 198.4 79.8 198.3 77.5"/>
<path d="M198.3 77.5 L216.6 77.5 L218.9 76.7 L234.7 75.5 L239.2 74.3 L265.0 75.5 L300.0 75.9 L326.4 75.9"/>
<path d="M364.0 76.2 C370.1 76.0 391.3 75.7 400.6 75.2 C409.9 74.7 412.3 73.5 419.6 72.9 C426.9 72.3 438.6 71.6 444.3 71.4 C450.0 71.2 450.3 71.6 453.8 72.0 C457.3 72.4 459.5 73.5 465.2 73.9 C470.9 74.3 481.0 74.3 488.0 74.2 C495.0 74.2 500.8 73.5 507.0 73.7 C513.2 73.9 522.4 75.3 525.5 75.6"/>
<path d="M349.3 76.1h5"/>
</g>
<path d="M199.9 183v20" stroke="#222" stroke-width="0.9"/>
<!-- upper orange bricks -->
<rect x="354.2" y="75.9" width="9.8" height="105.3" fill="url(#brick)"/>
<path d="M354.45 75.9v105.3M363.75 75.9v105.3" stroke="#5a2607" stroke-width="0.85"/>
<path d="M354.2 76.3h9.8" stroke="#222" stroke-width="1"/>
<rect x="525.5" y="75.9" width="10.6" height="105.3" fill="url(#brick)"/>
<path d="M525.75 75.9v105.3M535.85 75.9v105.3" stroke="#5a2607" stroke-width="0.85"/>
<path d="M525.5 76.3h10.6" stroke="#222" stroke-width="1"/>
<!-- beam -->
<rect x="352.7" y="181.4" width="183.55" height="7.5" fill="#c0c0c0" stroke="#3a3a3a" stroke-width="0.8"/>
<!-- RC block -->
<rect x="505.9" y="188.9" width="30.35" height="22.1" fill="#c0c0c0" stroke="#444" stroke-width="0.7"/>
<!-- brick column -->
<rect x="505.9" y="211" width="30.35" height="180.3" fill="url(#brick)"/>
<path d="M506.1 211v180.3M536.1 211v180.3" stroke="#5a2607" stroke-width="0.85"/>
<!-- footings -->
<rect x="199.5" y="391.3" width="172" height="29.2" fill="#c0c0c0" stroke="#3a3a3a" stroke-width="0.65"/>
<path d="M199.9 391.3v29.2M199.5 420.3h172" stroke="#222" stroke-width="0.9"/>
<rect x="373.5" y="391.4" width="177.75" height="19.1" fill="#c0c0c0" stroke="#3a3a3a" stroke-width="0.65"/>
<path d="M373.5 410.3h177.75" stroke="#444" stroke-width="0.8"/>
<!-- red circle -->
<circle cx="363" cy="179.4" r="18.95" fill="none" stroke="#e2404e" stroke-width="0.75"/>
<!-- level marks -->
<g stroke="#333" stroke-width="0.65" fill="none">
<path d="M281.7 173.5H251.5l7.75 7.6M259.25 166.2v15.2"/>
<path d="M289.2 382.9H258.9l7.6 8.1M266.5 375.5v15.8"/>
<path d="M588 249H558.75l7.25 7.3M566 241v15.2"/>
<path d="M656 159H603.3L528.5 196.3"/>
<path d="M633.8 196.2H580.7L521 263"/>
</g>
<g font-family="Liberation Serif" fill="#111" stroke="#111" stroke-width="0.17">
<text x="265" y="170.8" font-size="9">-0,0</text>
<text x="272.1" y="380.8" font-size="9" font-weight="bold" stroke-width="0">-2.1</text>
<text x="571.8" y="246.2" font-size="9">-0.9</text>
<text x="610" y="155.8" font-size="9.7">ЖБ балка</text>
<text x="587.3" y="193.1" font-size="9.7">Столб 1.5 кирпича</text>
</g>
</g>

<rect x="989.9" y="26.9" width="10.1" height="469.6" fill="#f3f3f5"/>
<rect x="990" y="28.2" width="9.5" height="1.6" fill="#ecebf0"/><path d="M990 29.3h9.2v1" stroke="#55555e" stroke-width="0.9" fill="none"/>
<rect x="990" y="30.6" width="9" height="8" fill="#ecebf0"/><path d="M990 38.6h9.2v-8M999.3 27v12" stroke="#8e8d98" stroke-width="0.7" fill="none"/>
<path d="M993 35.4h3.6l-1.8-2.2z" fill="#111"/>
<rect x="990" y="85" width="9.5" height="375.5" fill="#ecebf0"/>
<rect x="990" y="85" width="0.8" height="375.5" fill="#fff"/>
<rect x="990" y="85" width="9" height="0.7" fill="#fff"/>
<rect x="998" y="85" width="0.9" height="375.5" fill="#8e8d98"/>
<rect x="990" y="460" width="9.5" height="0.8" fill="#8e8d98"/>
<rect x="990" y="461.3" width="9.5" height="8.6" fill="#ecebf0" stroke="#aaa9b3" stroke-width="0.5"/>
<path d="M993 464.6h3.6l-1.8 2.2z" fill="#111"/>
<path d="M993.2 474.5h3l-1.5-1.8zM993.2 476.3h3l-1.5-1.8z" fill="#222"/>
<circle cx="994.7" cy="482.8" r="1.5" fill="none" stroke="#222" stroke-width="0.7"/>
<path d="M993.2 489.4h3l-1.5 1.8zM993.2 491.2h3l-1.5 1.8z" fill="#222"/>
<rect x="0" y="496" width="989.8" height="9" fill="#EBE9EE"/>
<rect x="45.4" y="496.3" width="935" height="8.3" fill="#eeecf1"/>
<rect x="45.4" y="496.9" width="935" height="0.8" fill="#fbfbfd"/>
<rect x="45.4" y="496.9" width="0.8" height="7.5" fill="#fbfbfd"/>
<rect x="45.4" y="504.2" width="944.2" height="1.5" fill="#a7a6ac"/>
<rect x="979.8" y="497" width="0.8" height="7.5" fill="#a7a6ac"/>
<rect x="18.8" y="496.6" width="8.8" height="8.4" fill="#f6f5fa" stroke="#6f82c4" stroke-width="0.7"/>
<path d="M3.4 499.2h4.6M3.4 500.6h4.6M3.4 502h4.6M3.4 503.4h4.6" stroke="#444" stroke-width="0.8"/>
<rect x="12.2" y="499" width="4" height="3" fill="#fff" stroke="#333" stroke-width="0.7"/><path d="M14.5 503.2h3v-2.6" stroke="#333" stroke-width="0.8" fill="none"/>
<rect x="20.8" y="498.8" width="4.8" height="4" fill="#fff" stroke="#333" stroke-width="0.8"/><path d="M23.2 498.8v4M20.8 500.8h4.8" stroke="#555" stroke-width="0.5"/>
<path d="M30 499h2.6c2.2 0 2.2 4 0 4h-2.6M30 501h3" stroke="#555" stroke-width="0.8" fill="none"/>
<rect x="36.6" y="496.6" width="8" height="7.8" fill="#efedf2" stroke="#fbfbfd" stroke-width="0.5"/>
<path d="M41.6 498.8v3.8l-2.4-1.9z" fill="#111"/>
<rect x="981" y="496.6" width="8.4" height="7.8" fill="#efedf2" stroke="#fbfbfd" stroke-width="0.5"/>
<path d="M984.2 498.8v3.8l2.4-1.9z" fill="#111"/>
<rect x="0" y="506.3" width="1000" height="0.7" fill="#f9f8fb"/>
<rect x="2" y="508.5" width="1" height="9" fill="#b9b7c2"/>
<text x="6" y="515.2" font-size="6.3" fill="#15151a" font-family="Liberation Sans" font-weight="normal" text-anchor="start" textLength="25" lengthAdjust="spacingAndGlyphs" >Действия</text>
<path d="M32.5 512.5h3l-1.5 1.8z" fill="#222"/>
<g transform="translate(43.7,513) scale(1)"><path d="M-2 -4v7l1.7-1.6 1.3 2.8 1-0.5-1.3-2.7h2.3z" fill="#fff" stroke="#333" stroke-width="0.6"/></g>
<rect x="51" y="508.5" width="0.7" height="9.5" fill="#cdcbd5"/>
<text x="54" y="515.2" font-size="6.3" fill="#15151a" font-family="Liberation Sans" font-weight="normal" text-anchor="start" textLength="34" lengthAdjust="spacingAndGlyphs" >Автофигуры</text>
<path d="M89.5 512.5h3l-1.5 1.8z" fill="#222"/>
<g transform="translate(100.5,513) scale(1)"><path d="M-3 -3l6 6" stroke="#444" stroke-width="0.7"/></g>
<g transform="translate(112,513) scale(1)"><path d="M-3 -3l5 5" stroke="#444" stroke-width="0.7"/><path d="M3.4 3.4l-3-0.8 2.2-2.2z" fill="#333"/></g>
<g transform="translate(124,513) scale(1)"><rect x="-4" y="-3" width="8" height="6" fill="none" stroke="#333" stroke-width="0.7"/></g>
<g transform="translate(136,513) scale(1)"><ellipse cx="0" cy="0" rx="4.2" ry="3" fill="none" stroke="#333" stroke-width="0.7"/></g>
<g transform="translate(148.3,513) scale(1)"><rect x="-3.8" y="-3.8" width="7.6" height="7.6" fill="#adadb0" stroke="#555" stroke-width="0.6"/><path d="M-2.5 -2h5M-2.5 -0.5h3" stroke="#e8e8e8" stroke-width="0.6"/></g>
<g transform="translate(160.3,513) scale(1)"><path d="M-4 3.6l5.4-7.4h1.8v7.4h-2v-2.2l-2.6 0.6-0.8 1.6z" fill="#3344b8"/><path d="M-0.2 0l1.6-2.2v1.9z" fill="#eceaf0"/></g>
<g transform="translate(171.5,513) scale(1)"><circle cx="0" cy="0" r="3" fill="none" stroke="#3a5ac8" stroke-width="1.2" stroke-dasharray="1.6 1"/><circle cx="0" cy="-3" r="1" fill="#d33"/></g>
<g transform="translate(184,513) scale(1)"><rect x="-3.8" y="-3.8" width="7.6" height="7.6" fill="#fff" stroke="#555" stroke-width="0.6"/><circle cx="0" cy="-1" r="1.6" fill="#d98b5a"/><path d="M-2.4 3.4c0-3 4.8-3 4.8 0z" fill="#3a5ac8"/></g>
<g transform="translate(196.7,513) scale(1)"><rect x="-4" y="-3.6" width="8" height="7.2" fill="#e9d66a" stroke="#555" stroke-width="0.6"/><path d="M-3.5 3l2.5-3 2 2 1.5-1.5 1.5 2.5z" fill="#4a8a4a"/><circle cx="2" cy="-1.6" r="0.9" fill="#fff"/></g>
<rect x="203.5" y="508.5" width="0.7" height="9.5" fill="#cdcbd5"/>
<g transform="translate(212,513) scale(1)"><path d="M-2.5 -0.5l3-3 3 3-3 3z" fill="#f3f3f8" stroke="#445" stroke-width="0.6"/><path d="M-3.2 0.5c-1 1.5 0 2 0.3 0.8" stroke="#3a5ac8" fill="#3a5ac8" stroke-width="0.5"/><rect x="-4" y="3" width="8" height="1.8" fill="#f4ee2a"/></g>
<path d="M218.0 512.5h3l-1.5 1.8z" fill="#222"/>
<g transform="translate(229,513) scale(1)"><path d="M-2.5 1.5l4.5-5" stroke="#445" stroke-width="1.2"/><rect x="-4" y="3" width="8" height="1.8" fill="#2a48d0"/></g>
<path d="M235.5 512.5h3l-1.5 1.8z" fill="#222"/>
<g transform="translate(246,513) scale(1)"><text x="-3" y="2" font-size="8" font-family="Liberation Sans" font-weight="bold" fill="#2a3fb0">A</text><rect x="-4" y="3" width="8" height="1.8" fill="#e0202a"/></g>
<path d="M253.5 512.5h3l-1.5 1.8z" fill="#222"/>
<g transform="translate(264,513) scale(1)"><rect x="-4" y="-3" width="8" height="0.7" fill="#333"/><rect x="-4" y="-0.8" width="8" height="1.2" fill="#333"/><rect x="-4" y="1.8" width="8" height="1.7" fill="#333"/></g>
<g transform="translate(276.5,513) scale(1)"><path d="M-4 -2.5h8" stroke="#999" stroke-width="0.8" stroke-dasharray="0.8 0.6"/><path d="M-4 0h8" stroke="#999" stroke-width="0.8" stroke-dasharray="1.6 0.8"/><path d="M-4 2.5h8" stroke="#999" stroke-width="0.8" stroke-dasharray="2.6 1"/></g>
<g transform="translate(289,513) scale(1)"><path d="M-4 -2.5h8M-4 0h8M-4 2.5h8" stroke="#333" stroke-width="0.7"/><path d="M4 -2.5l-2-1.2v2.4zM-4 0l2-1.2v2.4zM4 2.5l-2-1.2v2.4zM-4 2.5l2-1.2v2.4z" fill="#333"/></g>
<g transform="translate(300,513) scale(1)"><rect x="-2.2" y="-2.2" width="6" height="6" fill="#444"/><rect x="-3.8" y="-3.8" width="6" height="6" fill="#2e9a8e" stroke="#245" stroke-width="0.5"/></g>
<g transform="translate(311.5,513) scale(1)"><path d="M-4 -1.5l2-2h6v5.5l-2 2h-6z" fill="#6ab0a8" stroke="#356" stroke-width="0.5"/><rect x="-4" y="-1.5" width="6" height="5.5" fill="#9ad0c8" stroke="#356" stroke-width="0.5"/></g>
<path d="M319.5 515.2h3l-1.5 1.8z" fill="#222"/>
<rect x="0" y="519.8" width="1000" height="1" fill="#d4d2d8"/>
<rect x="0" y="521.3" width="1000" height="0.7" fill="#f9f8fb"/>
<text x="6" y="528.3" font-size="6" fill="#15151a" font-family="Liberation Sans" font-weight="normal" text-anchor="start" textLength="18" lengthAdjust="spacingAndGlyphs" >Стр. 1</text>
<text x="40" y="528.3" font-size="6" fill="#15151a" font-family="Liberation Sans" font-weight="normal" text-anchor="start" textLength="19" lengthAdjust="spacingAndGlyphs" >Разд 1</text>
<text x="83" y="528.3" font-size="6" fill="#15151a" font-family="Liberation Sans" font-weight="normal" text-anchor="start" textLength="8" lengthAdjust="spacingAndGlyphs" >1/1</text>
<text x="108" y="528.3" font-size="6" fill="#15151a" font-family="Liberation Sans" font-weight="normal" text-anchor="start" textLength="18" lengthAdjust="spacingAndGlyphs" >На 3см</text>
<text x="140" y="528.3" font-size="6" fill="#15151a" font-family="Liberation Sans" font-weight="normal" text-anchor="start" textLength="13" lengthAdjust="spacingAndGlyphs" >Ст 1</text>
<text x="163" y="528.3" font-size="6" fill="#15151a" font-family="Liberation Sans" font-weight="normal" text-anchor="start" textLength="16" lengthAdjust="spacingAndGlyphs" >Кол 2</text>
<text x="197" y="528.3" font-size="6" fill="#b5b3c0" font-family="Liberation Sans" font-weight="normal" text-anchor="start" textLength="9.5" lengthAdjust="spacingAndGlyphs" >ЗАП</text>
<text x="212.5" y="528.3" font-size="6" fill="#b5b3c0" font-family="Liberation Sans" font-weight="normal" text-anchor="start" textLength="14.5" lengthAdjust="spacingAndGlyphs" >ИСПР</text>
<text x="233" y="528.3" font-size="6" fill="#b5b3c0" font-family="Liberation Sans" font-weight="normal" text-anchor="start" textLength="10" lengthAdjust="spacingAndGlyphs" >ВДЛ</text>
<text x="249" y="528.3" font-size="6" fill="#15151a" font-family="Liberation Sans" font-weight="normal" text-anchor="start" textLength="11" lengthAdjust="spacingAndGlyphs" >ЗАМ</text>
<text x="265" y="528.3" font-size="6" fill="#15151a" font-family="Liberation Sans" font-weight="normal" text-anchor="start" textLength="31" lengthAdjust="spacingAndGlyphs" >русский (Ро</text>
<g transform="translate(311,526)"><path d="M-4 -2.5l4 1 4-1v5l-4 1-4-1z" fill="#d8d8dc" stroke="#111" stroke-width="1"/><path d="M0 -1.5v5" stroke="#222" stroke-width="0.5"/><path d="M1 -3l3.5 3.5" stroke="#b22" stroke-width="1"/></g>
<rect x="0" y="27" width="0.9" height="478.5" fill="#8f8e96"/>
<path d="M905 262v8.2l1.9-1.7 1.3 2.9 1.2-0.5-1.3-2.9h2.6z" fill="#fff" stroke="#3a3a40" stroke-width="0.6"/>
</svg>
</body></html>
